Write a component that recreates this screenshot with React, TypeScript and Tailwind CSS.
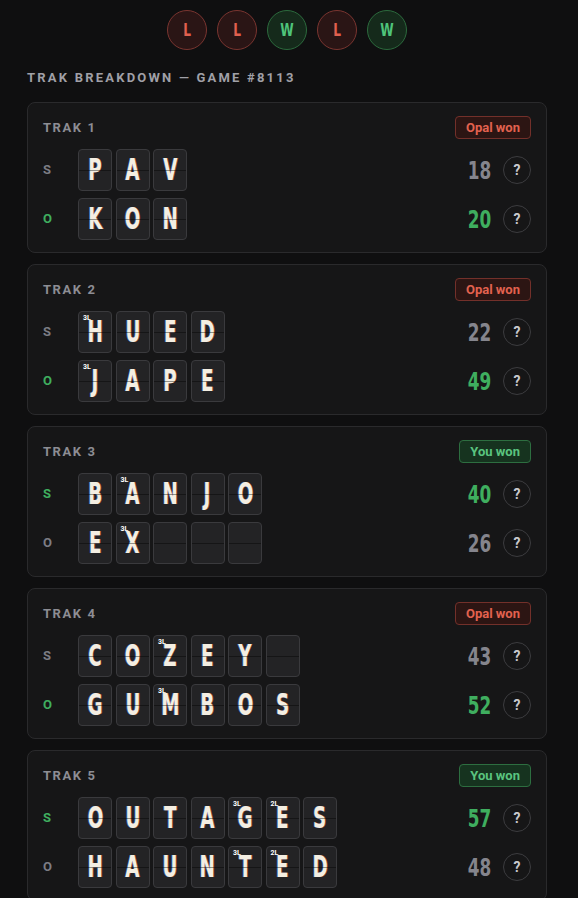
const results = ['L', 'L', 'W', 'L', 'W'];

type Side = { word: string; bonus: Record<number, string>; score: number };
type Trak = { n: number; winner: 'you' | 'opal'; s: Side; o: Side };

const traks: Trak[] = [
  { n: 1, winner: 'opal', s: { word: 'PAV', bonus: {}, score: 18 }, o: { word: 'KON', bonus: {}, score: 20 } },
  { n: 2, winner: 'opal', s: { word: 'HUED', bonus: { 0: '3L' }, score: 22 }, o: { word: 'JAPE', bonus: { 0: '3L' }, score: 49 } },
  { n: 3, winner: 'you', s: { word: 'BANJO', bonus: { 1: '3L' }, score: 40 }, o: { word: 'EX', bonus: { 1: '3L' }, score: 26 } },
  { n: 4, winner: 'opal', s: { word: 'COZEY', bonus: { 2: '3L' }, score: 43 }, o: { word: 'GUMBOS', bonus: { 2: '3L' }, score: 52 } },
  { n: 5, winner: 'you', s: { word: 'OUTAGES', bonus: { 4: '3L', 5: '2L' }, score: 57 }, o: { word: 'HAUNTED', bonus: { 4: '3L', 5: '2L' }, score: 48 } },
];

const ui = "font-['Roboto','Liberation_Sans',sans-serif]";
const narrow = "font-['Liberation_Sans_Narrow','DejaVu_Sans_Condensed','Liberation_Sans',sans-serif]";

function Tile({ letter, bonus }: { letter?: string; bonus?: string }) {
  return (
    <div className="relative w-[34px] h-[42px] rounded-[4px] border border-[#3a3a3d] bg-[#232325] flex items-center justify-center overflow-hidden">
      {letter && (
        <span
          className={`${narrow} inline-block scale-x-[0.68] text-[30px] font-bold leading-none text-[#f4eee2] [text-shadow:-1px_0_rgba(90,150,255,0.55),1px_0_rgba(255,120,60,0.55)]`}
        >
          {letter}
        </span>
      )}
      <span className="absolute inset-x-0 top-1/2 h-px bg-black/40" />
      {bonus && (
        <span className={`${ui} absolute top-[3px] left-[4px] text-[7px] font-bold leading-none text-white`}>{bonus}</span>
      )}
    </div>
  );
}

function Row({ label, side, len, win }: { label: string; side: Side; len: number; win: boolean }) {
  const cells = Array.from({ length: len }, (_, i) => side.word[i]);
  return (
    <div className="flex items-center h-[42px]">
      <div className={`${ui} w-[35px] text-[13px] font-bold ${win ? 'text-[#3fae5f]' : 'text-[#7c7c84]'}`}>{label}</div>
      <div className="flex gap-[3.5px]">
        {cells.map((c, i) => (
          <Tile key={i} letter={c} bonus={c ? side.bonus[i] : undefined} />
        ))}
      </div>
      <div className="ml-auto flex items-center gap-[12px]">
        <span
          className={`${narrow} inline-block scale-x-[0.75] origin-right text-[25px] font-bold leading-none ${win ? 'text-[#3fae5f]' : 'text-[#85858d]'}`}
        >
          {side.score}
        </span>
        <div className={`${ui} w-[28px] h-[28px] rounded-full border border-[#3c3c3f] flex items-center justify-center text-[14px] font-bold text-[#c9c9cd]`}>
          ?
        </div>
      </div>
    </div>
  );
}

function TrakCard({ t }: { t: Trak }) {
  const len = Math.max(t.s.word.length, t.o.word.length);
  const youWon = t.winner === 'you';
  return (
    <div className="rounded-[8px] border border-[#2a2a2c] bg-[#161617] pt-[13px] px-[15px] pb-[12px]">
      <div className="flex items-center justify-between h-[23px]">
        <span className={`${ui} text-[13px] font-bold tracking-[0.12em] text-[#8d8d94]`}>TRAK {t.n}</span>
        <span
          className={`${ui} h-[23px] px-[10px] rounded-[4px] border flex items-center text-[13px] font-bold ${
            youWon ? 'bg-[#16331f] border-[#2d6e40] text-[#5ac47f]' : 'bg-[#2c1513] border-[#73302a] text-[#e2624f]'
          }`}
        >
          {youWon ? 'You won' : 'Opal won'}
        </span>
      </div>
      <div className="mt-[10px] flex flex-col gap-[7px]">
        <Row label="S" side={t.s} len={len} win={t.s.score > t.o.score} />
        <Row label="O" side={t.o} len={len} win={t.o.score > t.s.score} />
      </div>
    </div>
  );
}

export default function App() {
  return (
    <div className="min-h-screen bg-[#0f0f10] pt-[10px] pb-6">
      <div className="w-[520px] ml-[27px]">
        <div className="flex justify-center gap-[10px]">
          {results.map((r, i) => (
            <div
              key={i}
              className={`w-[40px] h-[40px] rounded-full border flex items-center justify-center ${
                r === 'W' ? 'bg-[#152a1b] border-[#2c6a3d] text-[#4fc47a]' : 'bg-[#2a1515] border-[#7a3530] text-[#e0604f]'
              }`}
            >
              <span className={`${narrow} inline-block scale-x-[0.75] text-[18px] font-bold leading-none`}>{r}</span>
            </div>
          ))}
        </div>
        <div className={`${ui} mt-[20px] mb-[16px] text-[13px] leading-4 font-bold tracking-[0.17em] text-[#a0a0a7]`}>
          TRAK BREAKDOWN — GAME #8113
        </div>
        <div className="flex flex-col gap-[11px]">
          {traks.map(t => (
            <TrakCard key={t.n} t={t} />
          ))}
        </div>
      </div>
    </div>
  );
}
